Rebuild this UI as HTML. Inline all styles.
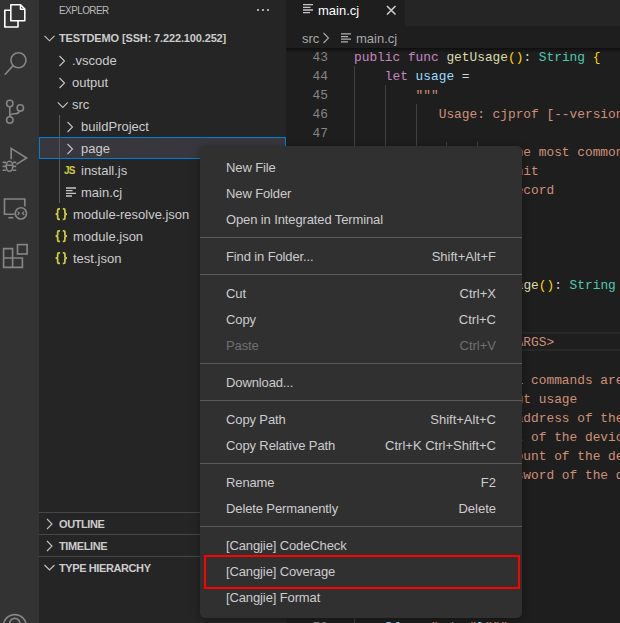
<!DOCTYPE html>
<html><head><meta charset="utf-8">
<style>
*{margin:0;padding:0;box-sizing:border-box}
html,body{width:620px;height:623px;overflow:hidden;background:#1e1e1e;font-family:"Liberation Sans",sans-serif}
.a{position:absolute;white-space:pre}
#act{position:absolute;left:0;top:0;width:39px;height:623px;background:#333333}
#side{position:absolute;left:39px;top:0;width:247px;height:623px;background:#252526}
.t{position:absolute;font-size:13px;color:#cccccc;white-space:pre;line-height:22px;height:22px;margin-top:1px}
.sh{position:absolute;left:39px;width:247px;height:22px;border-top:1px solid rgba(204,204,204,0.2)}
.sh span{position:absolute;left:20px;top:0;font-size:11px;font-weight:bold;color:#cccccc;line-height:22px;letter-spacing:-0.4px}
#tabs{position:absolute;left:286px;top:0;width:334px;height:26px;background:#252526}
#tab{position:absolute;left:286px;top:0;width:119px;height:26px;background:#1e1e1e}
.code{position:absolute;left:354px;font-family:"Liberation Mono",monospace;font-size:12.83px;line-height:19px;height:19px;white-space:pre;color:#d4d4d4;padding-top:1px}
.ln{position:absolute;left:290px;width:38px;text-align:right;font-family:"Liberation Mono",monospace;font-size:12.83px;line-height:19px;color:#858585;padding-top:1px}
.g{position:absolute;width:1px;background:#404040}
.k{color:#c586c0}.f{color:#dcdcaa}.b{color:#ffd700}.ty{color:#4ec9b0}.v{color:#9cdcfe}.s{color:#ce9178}
#menu{position:absolute;left:200px;top:146px;width:322px;height:472px;background:#303031;border-radius:5px;box-shadow:0 2px 8px rgba(0,0,0,0.36)}
.mi{position:absolute;left:26px;height:26px;line-height:26px;font-size:13px;color:#cccccc;white-space:pre;margin-top:1px;letter-spacing:-0.12px}
.mk{position:absolute;right:26px;height:26px;line-height:26px;font-size:13px;color:#cccccc;white-space:pre;text-align:right;margin-top:1px}
.dis{color:#6f6f6f}
.sep{position:absolute;left:0;width:322px;height:1px;background:#5a5a5a}
</style></head><body>
<div id="act">
 <svg width="39" height="623" style="position:absolute;left:0;top:0">
  <g fill="none" stroke="#ffffff" stroke-width="1.6" stroke-linejoin="round">
   <path d="M10.5 10.2 H4.8 V27 H18 V21"/>
   <path d="M10.8 4.8 H20.5 L24.8 9 V20.8 H10.8 Z"/>
   <path d="M20.5 4.8 V9.2 H24.8"/>
  </g>
  <g fill="none" stroke="#858585" stroke-width="1.65">
   <circle cx="18.45" cy="60.25" r="7.5"/>
   <path d="M13.1 65.6 L4.8 74.8"/>
   <g stroke-width="1.6"><circle cx="9.8" cy="103.5" r="3.2"/>
   <circle cx="9.8" cy="120" r="3.2"/>
   <circle cx="20.3" cy="107.9" r="3.2"/>
   <path d="M9.8 106.7 V116.8"/>
   <path d="M19.4 111 C19 113.2 17.6 113.8 14.5 113.8 C11.8 113.8 9.8 114.4 9.8 116.5"/></g>
   <path d="M11.2 159.2 V148.4 L26.6 158 L16.4 164.4"/>
   <ellipse cx="9.5" cy="166.2" rx="3.3" ry="5"/>
   <path d="M6.2 165.2 H12.8 M2.6 162.4 H6.2 M2.6 166.3 H6 M2.6 170.2 H6.4 M12.8 162.4 H16.2 M13 166.3 H16.2 M12.6 170.2 H16.2"/>
   <path d="M14.6 214.2 H4.5 V199 H24.8 V206.6"/>
   <path d="M8.4 217.7 H13.4"/>
   <circle cx="20.9" cy="213.4" r="5.6"/>
   <path stroke-width="1.25" d="M17.6 211.6 L19.4 213.3 L17.6 215 M24.2 211.6 L22.4 213.3 L24.2 215"/>
   <path d="M3.6 248.6 H12.6 V258 H22.4 V267.4 H3.6 Z M3.6 258 H12.6 V267.4"/>
   <rect x="17.5" y="244.6" width="9.6" height="9.4"/>
   <circle cx="14.8" cy="626" r="11.4"/>
   <circle cx="14.8" cy="623.6" r="5.2"/>
  </g>
 </svg>
</div>
<div id="side"></div>
<!-- explorer header -->
<div class="a" style="left:59px;top:0;font-size:11px;line-height:20px;color:#bbbbbb;letter-spacing:-0.6px;transform:scaleX(0.9);transform-origin:0 0">EXPLORER</div>
<svg class="a" width="20" height="6" style="left:255px;top:7px"><g fill="#cccccc"><circle cx="3" cy="3" r="1.1"/><circle cx="8" cy="3" r="1.1"/><circle cx="13" cy="3" r="1.1"/></g></svg>
<div class="a" style="left:39px;top:137px;width:247px;height:22px;background:#37373d;border:1px solid #007fd4"></div>
<!-- chevrons svg -->
<svg class="a" width="247" height="623" style="left:39px;top:0">
 <g fill="none" stroke="#c5c5c5" stroke-width="1.1">
  <path d="M5.5 35.8 L10.5 40.8 L15.5 35.8"/>
  <path d="M20.5 56 L25.5 61 L20.5 66"/>
  <path d="M20.5 78 L25.5 83 L20.5 88"/>
  <path d="M18.8 102.4 L23.8 107.4 L28.8 102.4"/>
  <path d="M28.5 122 L33.5 127 L28.5 132"/>
  <path d="M28.5 144 L33.5 149 L28.5 154"/>
  <path d="M8 519 L13 524 L8 529"/>
  <path d="M8 541 L13 546 L8 551"/>
  <path d="M5.5 565 L10.5 570 L15.5 565"/>
 </g>
 <path d="M20.5 115 V203" stroke="#585858" stroke-width="1"/>
 <g fill="none" stroke="#cbcb41" stroke-width="1.75">
  <g transform="translate(0,0)"><path d="M21 208.9 H19.7 Q18.7 208.9 18.7 210 V212.6 Q18.7 214 16.6 214 Q18.7 214 18.7 215.4 V218.2 Q18.7 219.3 19.7 219.3 H21"/><path d="M23.8 208.9 H24.9 Q25.9 208.9 25.9 210 V212.6 Q25.9 214 28 214 Q25.9 214 25.9 215.4 V218.2 Q25.9 219.3 24.9 219.3 H23.8"/></g>
  <g transform="translate(0,22)"><path d="M21 208.9 H19.7 Q18.7 208.9 18.7 210 V212.6 Q18.7 214 16.6 214 Q18.7 214 18.7 215.4 V218.2 Q18.7 219.3 19.7 219.3 H21"/><path d="M23.8 208.9 H24.9 Q25.9 208.9 25.9 210 V212.6 Q25.9 214 28 214 Q25.9 214 25.9 215.4 V218.2 Q25.9 219.3 24.9 219.3 H23.8"/></g>
  <g transform="translate(0,44)"><path d="M21 208.9 H19.7 Q18.7 208.9 18.7 210 V212.6 Q18.7 214 16.6 214 Q18.7 214 18.7 215.4 V218.2 Q18.7 219.3 19.7 219.3 H21"/><path d="M23.8 208.9 H24.9 Q25.9 208.9 25.9 210 V212.6 Q25.9 214 28 214 Q25.9 214 25.9 215.4 V218.2 Q25.9 219.3 24.9 219.3 H23.8"/></g>
 </g>
</svg>
<div class="a" style="left:59px;top:27px;font-size:11px;font-weight:bold;color:#cccccc;line-height:22px;letter-spacing:-0.14px">TESTDEMO [SSH: 7.222.100.252]</div>
<div class="t" style="left:72px;top:49px">.vscode</div>
<div class="t" style="left:72px;top:71px">output</div>
<div class="t" style="left:72px;top:93px">src</div>
<div class="t" style="left:81px;top:115px">buildProject</div>
<div class="t" style="left:81px;top:137px">page</div>
<div class="a" style="left:64px;top:160px;font-size:10px;font-weight:bold;color:#cbcb41;line-height:22px;letter-spacing:-0.8px">JS</div>
<div class="t" style="left:81px;top:159px">install.js</div>
<svg class="a" width="12" height="12" style="left:65px;top:186px"><g stroke="#c5c5c5" stroke-width="1.3"><path d="M1 2 H11 M1 4.7 H7.5 M1 7.3 H11 M1 10 H7"/></g></svg>
<div class="t" style="left:81px;top:181px">main.cj</div>
<div class="t" style="left:73px;top:203px">module-resolve.json</div>
<div class="t" style="left:73px;top:225px">module.json</div>
<div class="t" style="left:73px;top:247px">test.json</div>
<div class="sh" style="top:512px"><span>OUTLINE</span></div>
<div class="sh" style="top:534px"><span>TIMELINE</span></div>
<div class="sh" style="top:556px"><span>TYPE HIERARCHY</span></div>

<!-- editor -->
<div id="tabs"></div>
<div id="tab"></div>
<svg class="a" width="12" height="12" style="left:302px;top:2px"><g stroke="#c5c5c5" stroke-width="1.3"><path d="M1 2.6 H11 M1 5.3 H8.5 M1 8 H11 M1 10.6 H8"/></g></svg>
<div class="a" style="left:318px;top:-2px;font-size:13px;line-height:25px;color:#ffffff">main.cj</div>
<svg class="a" width="12" height="12" style="left:385px;top:4px"><g stroke="#cccccc" stroke-width="1.6"><path d="M2 2 L10.5 10.5 M10.5 2 L2 10.5"/></g></svg>
<div class="a" style="left:302px;top:28px;font-size:13px;line-height:22px;color:#a9a9a9">src</div>
<svg class="a" width="10" height="12" style="left:322px;top:32px"><path d="M1.5 1 L6.5 6 L1.5 11" fill="none" stroke="#a9a9a9" stroke-width="1.1"/></svg>
<svg class="a" width="12" height="12" style="left:340px;top:31px"><g stroke="#b0b0b0" stroke-width="1.3"><path d="M1 2.9 H11 M1 5.6 H8 M1 8.2 H11 M1 10.8 H8"/></g></svg>
<div class="a" style="left:356px;top:28px;font-size:13px;line-height:22px;color:#a9a9a9">main.cj</div>
<div class="a" style="left:286px;top:332px;width:334px;height:19px;border-top:2px solid #282828;border-bottom:2px solid #282828"></div>
<div class="ln" style="top:47px">43</div>
<div class="code" style="top:47px"><span class="k">public</span> <span class="k">func</span> <span class="f">getUsage</span><span class="b">()</span>: <span class="ty">String</span> <span class="b">{</span></div>
<div class="ln" style="top:66px">44</div>
<div class="code" style="top:66px">    <span class="k">let</span> <span class="v">usage</span> =</div>
<div class="ln" style="top:85px">45</div>
<div class="code" style="top:85px">        <span class="s">"""</span></div>
<div class="ln" style="top:104px">46</div>
<div class="code" style="top:104px">           <span class="s">Usage: cjprof [--version] [--help] &lt;command&gt;</span></div>
<div class="ln" style="top:123px">47</div>
<div class="ln" style="top:142px">48</div>
<div class="code" style="top:142px">                    <span class="s">The most commonly used</span></div>
<div class="ln" style="top:161px">49</div>
<div class="code" style="top:161px">                    <span class="s">init</span></div>
<div class="ln" style="top:180px">50</div>
<div class="code" style="top:180px">                    <span class="s">record</span></div>
<div class="ln" style="top:199px">51</div>
<div class="ln" style="top:218px">52</div>
<div class="ln" style="top:237px">53</div>
<div class="ln" style="top:256px">54</div>
<div class="ln" style="top:275px">55</div>
<div class="code" style="top:275px">    <span class="k">public</span> <span class="k">func</span> <span class="f">getUsage</span><span class="b">()</span>: <span class="ty">String</span> <span class="b">{</span></div>
<div class="ln" style="top:294px">56</div>
<div class="ln" style="top:313px">57</div>
<div class="ln" style="top:332px">58</div>
<div class="code" style="top:332px">                    <span class="s">&lt;ARGS&gt;</span></div>
<div class="ln" style="top:351px">59</div>
<div class="ln" style="top:370px">60</div>
<div class="code" style="top:370px">                   <span class="s">all commands are:</span></div>
<div class="ln" style="top:389px">61</div>
<div class="code" style="top:389px">                  <span class="s">about usage</span></div>
<div class="ln" style="top:408px">62</div>
<div class="code" style="top:408px">                     <span class="s">address of the device</span></div>
<div class="ln" style="top:427px">63</div>
<div class="code" style="top:427px">                  <span class="s">port of the device</span></div>
<div class="ln" style="top:446px">64</div>
<div class="code" style="top:446px">                  <span class="s">account of the device</span></div>
<div class="ln" style="top:465px">65</div>
<div class="code" style="top:465px">                  <span class="s">password of the device</span></div>
<div class="ln" style="top:484px">66</div>
<div class="ln" style="top:503px">67</div>
<div class="ln" style="top:522px">68</div>
<div class="ln" style="top:541px">69</div>
<div class="ln" style="top:560px">70</div>
<div class="ln" style="top:579px">71</div>
<div class="ln" style="top:598px">72</div>
<div class="ln" style="top:617px">73</div>
<div class="code" style="top:617px">    <span class="v">${</span><span class="v">name</span><span class="s">"adaa"</span><span class="v">}</span><span class="s">"""</span></div>
<div class="g" style="left:354px;top:66px;height:557px"></div>
<div class="g" style="left:385px;top:85px;height:532px"></div>
<div class="g" style="left:416px;top:104px;height:513px"></div>
<div class="g" style="left:446px;top:142px;height:19px"></div>
<div class="g" style="left:477px;top:142px;height:19px"></div>
<div class="a" style="left:286px;top:48px;width:334px;height:5px;background:linear-gradient(rgba(0,0,0,0.5),rgba(0,0,0,0))"></div>
<div id="menu">
<div class="mi" style="top:8px">New File</div>
<div class="mi" style="top:34px">New Folder</div>
<div class="mi" style="top:60px">Open in Integrated Terminal</div>
<div class="sep" style="top:91px"></div>
<div class="mi" style="top:97px">Find in Folder...</div>
<div class="mk" style="top:97px">Shift+Alt+F</div>
<div class="sep" style="top:128px"></div>
<div class="mi" style="top:134px">Cut</div>
<div class="mk" style="top:134px">Ctrl+X</div>
<div class="mi" style="top:160px">Copy</div>
<div class="mk" style="top:160px">Ctrl+C</div>
<div class="mi dis" style="top:186px">Paste</div>
<div class="mk dis" style="top:186px">Ctrl+V</div>
<div class="sep" style="top:217px"></div>
<div class="mi" style="top:223px">Download...</div>
<div class="sep" style="top:254px"></div>
<div class="mi" style="top:260px">Copy Path</div>
<div class="mk" style="top:260px">Shift+Alt+C</div>
<div class="mi" style="top:286px">Copy Relative Path</div>
<div class="mk" style="top:286px">Ctrl+K Ctrl+Shift+C</div>
<div class="sep" style="top:317px"></div>
<div class="mi" style="top:323px">Rename</div>
<div class="mk" style="top:323px">F2</div>
<div class="mi" style="top:349px">Delete Permanently</div>
<div class="mk" style="top:349px">Delete</div>
<div class="sep" style="top:380px"></div>
<div class="mi" style="top:386px">[Cangjie] CodeCheck</div>
<div class="mi" style="top:412px">[Cangjie] Coverage</div>
<div class="mi" style="top:438px">[Cangjie] Format</div>
<div class="a" style="left:4px;top:409px;width:316px;height:34px;border:2px solid #ff0000"></div>
</div>
</body></html>
